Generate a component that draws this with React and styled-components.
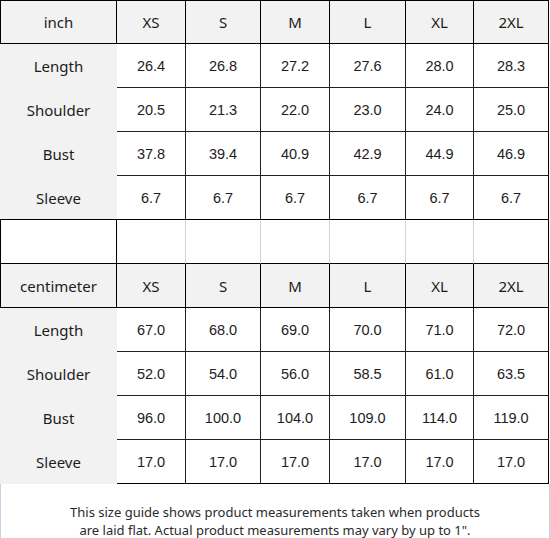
import React from "react";
import styled, { createGlobalStyle } from "styled-components";

const Global = createGlobalStyle`
  html, body { margin: 0; padding: 0; background: #ffffff; }
  body { width: 550px; }
`;

const COLS = "117px 69px 75px 69px 76px 68px 75px";
const LABEL_FONT = `"Noto Sans", "Open Sans", sans-serif`;
const NUM_FONT = `"Liberation Sans", Arial, sans-serif`;

const Sheet = styled.div`
  width: 549px;
  display: flex;
  flex-direction: column;
`;

const Row = styled.div`
  display: grid;
  grid-template-columns: ${COLS};
  height: ${(p) => p.$h || 44}px;
`;

const Cell = styled.div`
  box-sizing: border-box;
  display: flex;
  align-items: center;
  justify-content: center;
  background: ${(p) => (p.$gray ? "#f2f2f2" : "#ffffff")};
  color: #1c1c1c;
  font-family: ${(p) => (p.$num ? NUM_FONT : LABEL_FONT)};
  font-size: ${(p) => (p.$num ? "14.5px" : "15px")};
  border-top: ${(p) => (p.$top ? "1px solid #000" : "none")};
  border-left: ${(p) => (p.$left ? "1px solid #000" : "none")};
  border-right: ${(p) => p.$right || "none"};
  border-bottom: ${(p) => p.$bottom || "none"};
`;

const Footer = styled.div`
  box-sizing: border-box;
  width: 550px;
  height: 55px;
  border-left: 1px solid #c9d1e2;
  border-right: 1px solid #c9d1e2;
  border-bottom: 1px solid #c9d1e2;
  padding-top: 19px;
  text-align: center;
  font-family: ${LABEL_FONT};
  font-size: 13px;
  line-height: 18px;
  color: #2a2a2a;
`;

const BLACK = "1px solid #000";
const DARK = "1px solid #222";
const LIGHT = "1px solid #c9d1e2";

const sizes = ["XS", "S", "M", "L", "XL", "2XL"];

const inch = [
  ["Length", "26.4", "26.8", "27.2", "27.6", "28.0", "28.3"],
  ["Shoulder", "20.5", "21.3", "22.0", "23.0", "24.0", "25.0"],
  ["Bust", "37.8", "39.4", "40.9", "42.9", "44.9", "46.9"],
  ["Sleeve", "6.7", "6.7", "6.7", "6.7", "6.7", "6.7"],
];

const cm = [
  ["Length", "67.0", "68.0", "69.0", "70.0", "71.0", "72.0"],
  ["Shoulder", "52.0", "54.0", "56.0", "58.5", "61.0", "63.5"],
  ["Bust", "96.0", "100.0", "104.0", "109.0", "114.0", "119.0"],
  ["Sleeve", "17.0", "17.0", "17.0", "17.0", "17.0", "17.0"],
];

function HeaderRow({ unit, top, h }) {
  return (
    <Row $h={h}>
      <Cell $gray $top={top} $left $right={BLACK} $bottom={BLACK}>
        {unit}
      </Cell>
      {sizes.map((s) => (
        <Cell key={s} $gray $top={top} $right={BLACK} $bottom={BLACK}>
          {s}
        </Cell>
      ))}
    </Row>
  );
}

function DataRows({ rows, closeLabel }) {
  return rows.map((r, i) => {
    const last = i === rows.length - 1;
    return (
      <Row key={r[0]}>
        <Cell $gray $bottom={last && closeLabel ? BLACK : "none"}>
          {r[0]}
        </Cell>
        {r.slice(1).map((v, j) => (
          <Cell
            key={j}
            $num
            $right={j === 5 ? BLACK : DARK}
            $bottom={last ? BLACK : DARK}
          >
            {v}
          </Cell>
        ))}
      </Row>
    );
  });
}

function EmptyRow() {
  return (
    <Row>
      <Cell $left $right={BLACK} $bottom={BLACK} />
      {sizes.map((s, j) => (
        <Cell key={s} $right={j === 5 ? BLACK : LIGHT} $bottom={BLACK} />
      ))}
    </Row>
  );
}

export default function App() {
  return (
    <>
      <Global />
      <Sheet>
        <HeaderRow unit="inch" top h={44} />
        <DataRows rows={inch} closeLabel />
        <EmptyRow />
        <HeaderRow unit="centimeter" />
        <DataRows rows={cm} />
      </Sheet>
      <Footer>
        This size guide shows product measurements taken when products
        <br />
        are laid flat. Actual product measurements may vary by up to 1".
      </Footer>
    </>
  );
}
